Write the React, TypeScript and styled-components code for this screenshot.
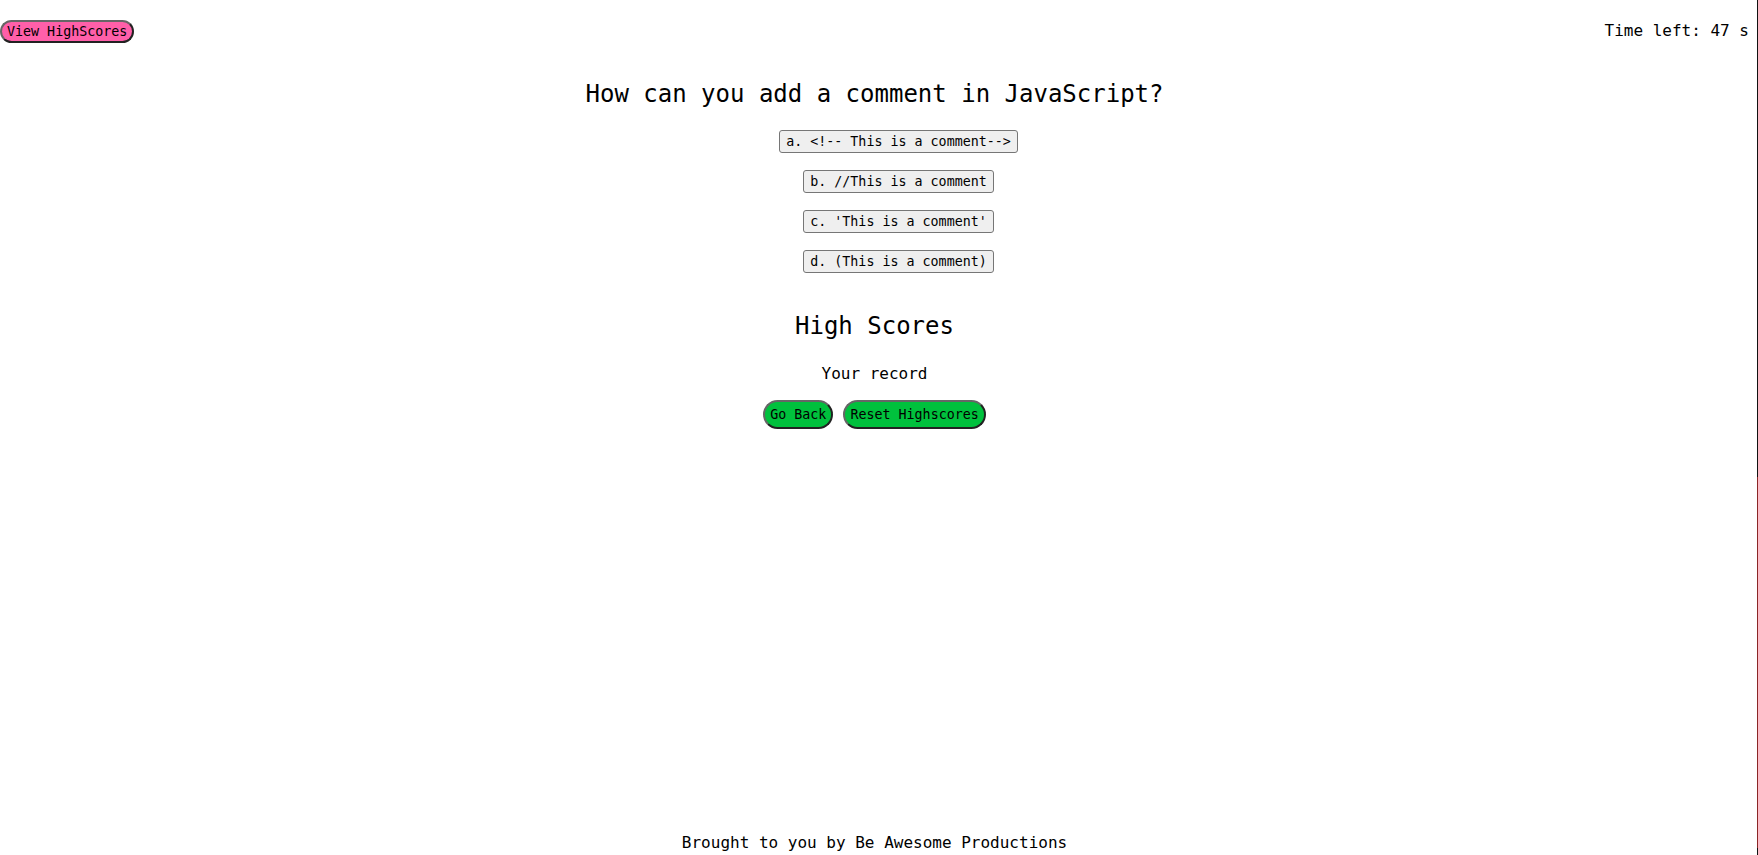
import React, { useState } from 'react';
import styled, { createGlobalStyle } from 'styled-components';

const GlobalStyle = createGlobalStyle`
  html, body {
    margin: 0;
    padding: 0;
    background: #ffffff;
    color: #000000;
  }

  body {
    font-family: 'DejaVu Sans Mono', 'Liberation Mono', monospace;
  }
`;

const Frame = styled.div`
  display: flex;
  min-height: 100vh;
`;

const Main = styled.div`
  flex: 1;
  display: flex;
  flex-direction: column;
  align-items: center;
`;

const Gutter = styled.div`
  width: 8px;
`;

const EdgeLine = styled.div`
  width: 1px;
  background: linear-gradient(
    #111111 0 477px,
    #8a2626 477px 848px,
    #111111 848px
  );
`;

const Header = styled.header`
  align-self: stretch;
  display: flex;
  justify-content: space-between;
  align-items: center;
  margin-top: 19px;
  height: 24px;
`;

const PillButton = styled.button<{ $color: string; $padY: number }>`
  font-family: inherit;
  font-size: 13.333px;
  line-height: 17px;
  color: #000000;
  background: ${(p) => p.$color};
  border: 2px solid;
  border-color: #666666 #222222 #222222 #666666;
  border-radius: 16px;
  padding: ${(p) => p.$padY}px 5px;
  cursor: pointer;
`;

const Timer = styled.div`
  font-size: 16px;
  line-height: 20px;
`;

const Title = styled.h2`
  font-size: 24px;
  font-weight: normal;
  line-height: 32px;
  margin: ${(p) => (p.as === 'h3' ? '37px 0 0' : '35px 0 0')};
`;

const AnswerList = styled.ul`
  list-style: none;
  margin: 20px 0 0;
  padding: 0 0 0 48px;
  display: flex;
  flex-direction: column;
  align-items: center;
  gap: 17px;
`;

const AnswerButton = styled.button`
  font-family: inherit;
  font-size: 13.333px;
  line-height: 17px;
  color: #000000;
  background: #efefef;
  border: 1px solid #767676;
  border-radius: 3px;
  padding: 2px 6px;
  cursor: pointer;

  &:hover {
    background: #e5e5e5;
  }
`;

const Record = styled.p`
  font-size: 16px;
  line-height: 20px;
  margin: 22px 0 0;
`;

const ButtonRow = styled.div`
  display: flex;
  gap: 10px;
  margin-top: 16px;
`;

const Footer = styled.footer`
  margin-top: auto;
  margin-bottom: 2px;
  font-size: 16px;
  line-height: 20px;
`;

const answers = [
  'a. <!-- This is a comment-->',
  'b. //This is a comment',
  "c. 'This is a comment'",
  'd. (This is a comment)',
];

const App: React.FC = () => {
  const [picked, setPicked] = useState<number | null>(null);

  return (
    <>
      <GlobalStyle />
      <Frame>
        <Main>
          <Header>
            <PillButton $color="#ff5fa9" $padY={1}>
              View HighScores
            </PillButton>
            <Timer>Time left: 47 s</Timer>
          </Header>

          <Title>How can you add a comment in JavaScript?</Title>
          <AnswerList>
            {answers.map((a, i) => (
              <li key={a}>
                <AnswerButton
                  type="button"
                  aria-pressed={picked === i}
                  onClick={() => setPicked(i)}
                >
                  {a}
                </AnswerButton>
              </li>
            ))}
          </AnswerList>

          <Title as="h3">High Scores</Title>
          <Record>Your record</Record>
          <ButtonRow>
            <PillButton $color="#00c13d" $padY={4}>
              Go Back
            </PillButton>
            <PillButton $color="#00c13d" $padY={4}>
              Reset Highscores
            </PillButton>
          </ButtonRow>

          <Footer>Brought to you by Be Awesome Productions</Footer>
        </Main>
        <Gutter />
        <EdgeLine />
      </Frame>
    </>
  );
};

export default App;
